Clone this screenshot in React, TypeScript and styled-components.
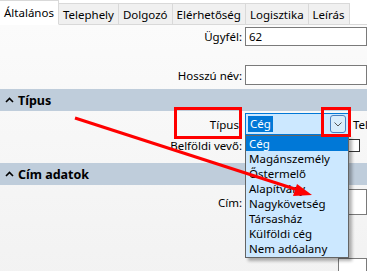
import React from "react";
import styled, { createGlobalStyle } from "styled-components";

const GlobalStyle = createGlobalStyle`
  html, body { margin: 0; padding: 0; }
  body {
    width: 367px;
    height: 271px;
    overflow: hidden;
    font-family: "Noto Sans", "Open Sans", sans-serif;
    font-size: 11.5px;
    color: #000;
    background: #fff;
  }
`;

const TABS = ["Általános", "Telephely", "Dolgozó", "Elérhetőség", "Logisztika", "Leírás"];
const OPTIONS = [
  "Cég",
  "Magánszemély",
  "Őstermelő",
  "Alapítvány",
  "Nagykövetség",
  "Társasház",
  "Külföldi cég",
  "Nem adóalany",
];

const Page = styled.div`
  position: relative;
  width: 367px;
  height: 271px;
  overflow: hidden;
  display: flex;
  flex-direction: column;
`;

const TabStrip = styled.div`
  display: flex;
  align-items: flex-end;
  height: 25px;
  flex-shrink: 0;
  border-bottom: 1px solid #d9d9d9;
  box-sizing: border-box;
  background: #fff;
`;

const Tab = styled.div<{ $active?: boolean }>`
  display: flex;
  align-items: center;
  box-sizing: border-box;
  padding: 0 4px;
  white-space: nowrap;
  height: ${(p) => (p.$active ? "25px" : "22px")};
  margin-bottom: -1px;
  margin-left: ${(p) => (p.$active ? "0" : "-1px")};
  background: ${(p) => (p.$active ? "#fff" : "#f0f0f0")};
  border: 1px solid #d9d9d9;
  border-bottom: ${(p) => (p.$active ? "1px solid #fff" : "1px solid #d9d9d9")};
  border-left: ${(p) => (p.$active ? "none" : "1px solid #d9d9d9")};
  position: relative;
  z-index: ${(p) => (p.$active ? 1 : 0)};
`;

const Body = styled.div`
  flex: 1;
  background: linear-gradient(#fbfbfb, #f2f2f2);
  display: flex;
  flex-direction: column;
`;

const Form = styled.div<{ $pt: number; $pb: number; $gap: number }>`
  display: grid;
  grid-template-columns: 242px 1fr;
  column-gap: 3px;
  row-gap: ${(p) => p.$gap}px;
  padding: ${(p) => p.$pt}px 0 ${(p) => p.$pb}px 0;
  align-items: center;
`;

const Label = styled.div`
  text-align: right;
  white-space: nowrap;
`;

const Field = styled.div`
  display: flex;
  align-items: center;
  gap: 4px;
  white-space: nowrap;
  overflow: hidden;
`;

const Input = styled.div<{ $h?: number; $indent?: number }>`
  box-sizing: border-box;
  height: ${(p) => p.$h ?? 19}px;
  margin-left: ${(p) => p.$indent ?? 0}px;
  flex: 1;
  background: #fff;
  border: 1px solid #7a7a7a;
  padding: 0 3px;
  display: flex;
  align-items: center;
`;

const SectionHeader = styled.div`
  height: 22px;
  flex-shrink: 0;
  display: flex;
  align-items: center;
  gap: 4px;
  padding-left: 5px;
  background: #bfcddb;
  font-weight: bold;
  font-size: 12.5px;
`;

const Combo = styled.div`
  box-sizing: border-box;
  width: 104px;
  flex-shrink: 0;
  height: 22px;
  background: #cce8ff;
  border: 1px solid #0078d7;
  display: flex;
  align-items: center;
  padding: 0 2px;
`;

const Selected = styled.span`
  background: #0078d7;
  color: #fff;
  padding: 0 2px;
  line-height: 16px;
`;

const DropButton = styled.div`
  margin-left: auto;
  width: 14px;
  height: 16px;
  border: 1px solid #4a7fbf;
  border-radius: 3px;
  display: flex;
  align-items: center;
  justify-content: center;
  background: #d8ecfb;
`;

const DropdownList = styled.div`
  position: absolute;
  left: 245px;
  top: 135px;
  width: 104px;
  box-sizing: border-box;
  background: #cce8ff;
  border: 1px solid #646464;
  box-shadow: 3px 3px 3px rgba(0, 0, 0, 0.3);
  z-index: 5;
  padding-bottom: 1px;
`;

const Option = styled.div<{ $active?: boolean }>`
  height: 15px;
  line-height: 15px;
  padding-left: 3px;
  background: ${(p) => (p.$active ? "#0078d7" : "transparent")};
  color: ${(p) => (p.$active ? "#fff" : "#000")};
`;

const Check = styled.div`
  width: 13px;
  height: 13px;
  flex-shrink: 0;
  box-sizing: border-box;
  margin-left: 102px;
  background: #fff;
  border: 1px solid #333;
`;

const Highlight = styled.div<{ $x: number; $y: number; $w: number; $h: number }>`
  position: absolute;
  left: ${(p) => p.$x}px;
  top: ${(p) => p.$y}px;
  width: ${(p) => p.$w}px;
  height: ${(p) => p.$h}px;
  box-sizing: border-box;
  border: 3px solid #ff0000;
  z-index: 8;
`;

const Overlay = styled.svg`
  position: absolute;
  left: 0;
  top: 0;
  z-index: 9;
  pointer-events: none;
`;

const Caret = () => (
  <svg width="9" height="6" viewBox="0 0 9 6">
    <path d="M1 5 L4.5 1.5 L8 5" fill="none" stroke="#000" strokeWidth="1.6" />
  </svg>
);

const Chevron = () => (
  <svg width="8" height="5" viewBox="0 0 8 5">
    <path d="M0.5 0.5 L4 4 L7.5 0.5" fill="none" stroke="#555" strokeWidth="1" />
  </svg>
);

export default function App() {
  return (
    <Page>
      <GlobalStyle />
      <TabStrip>
        {TABS.map((t, i) => (
          <Tab key={t} $active={i === 0}>
            {t}
          </Tab>
        ))}
      </TabStrip>
      <Body>
        <Form $pt={2} $pb={4} $gap={19}>
          <Label>Ügyfél:</Label>
          <Field>
            <Input>62</Input>
          </Field>
          <Label>Hosszú név:</Label>
          <Field>
            <Input $h={20} />
          </Field>
        </Form>

        <SectionHeader>
          <Caret />
          Típus
        </SectionHeader>
        <Form $pt={2} $pb={10} $gap={3}>
          <Label>Típus:</Label>
          <Field>
            <Combo>
              <Selected>Cég</Selected>
              <DropButton>
                <Chevron />
              </DropButton>
            </Combo>
            Tel
          </Field>
          <Label>Belföldi vevő:</Label>
          <Field>
            <Check />
          </Field>
        </Form>

        <SectionHeader>
          <Caret />
          Cím adatok
        </SectionHeader>
        <Form $pt={4} $pb={0} $gap={43}>
          <Label>Cím:</Label>
          <Field>
            <Input $h={26} />
          </Field>
          <Label />
          <Field>
            <Input $h={20} $indent={93} />
          </Field>
        </Form>
      </Body>

      <DropdownList>
        {OPTIONS.map((o, i) => (
          <Option key={o} $active={i === 0}>
            {o}
          </Option>
        ))}
      </DropdownList>

      <Highlight $x={174} $y={107} $w={68} $h={32} />
      <Highlight $x={321} $y={107} $w={30} $h={30} />

      <Overlay width="367" height="271" viewBox="0 0 367 271">
        <line x1="75" y1="118" x2="298" y2="190" stroke="#ff0000" strokeWidth="3" />
        <polygon points="312,195 293,196 297,184" fill="#ff0000" />
      </Overlay>
    </Page>
  );
}
